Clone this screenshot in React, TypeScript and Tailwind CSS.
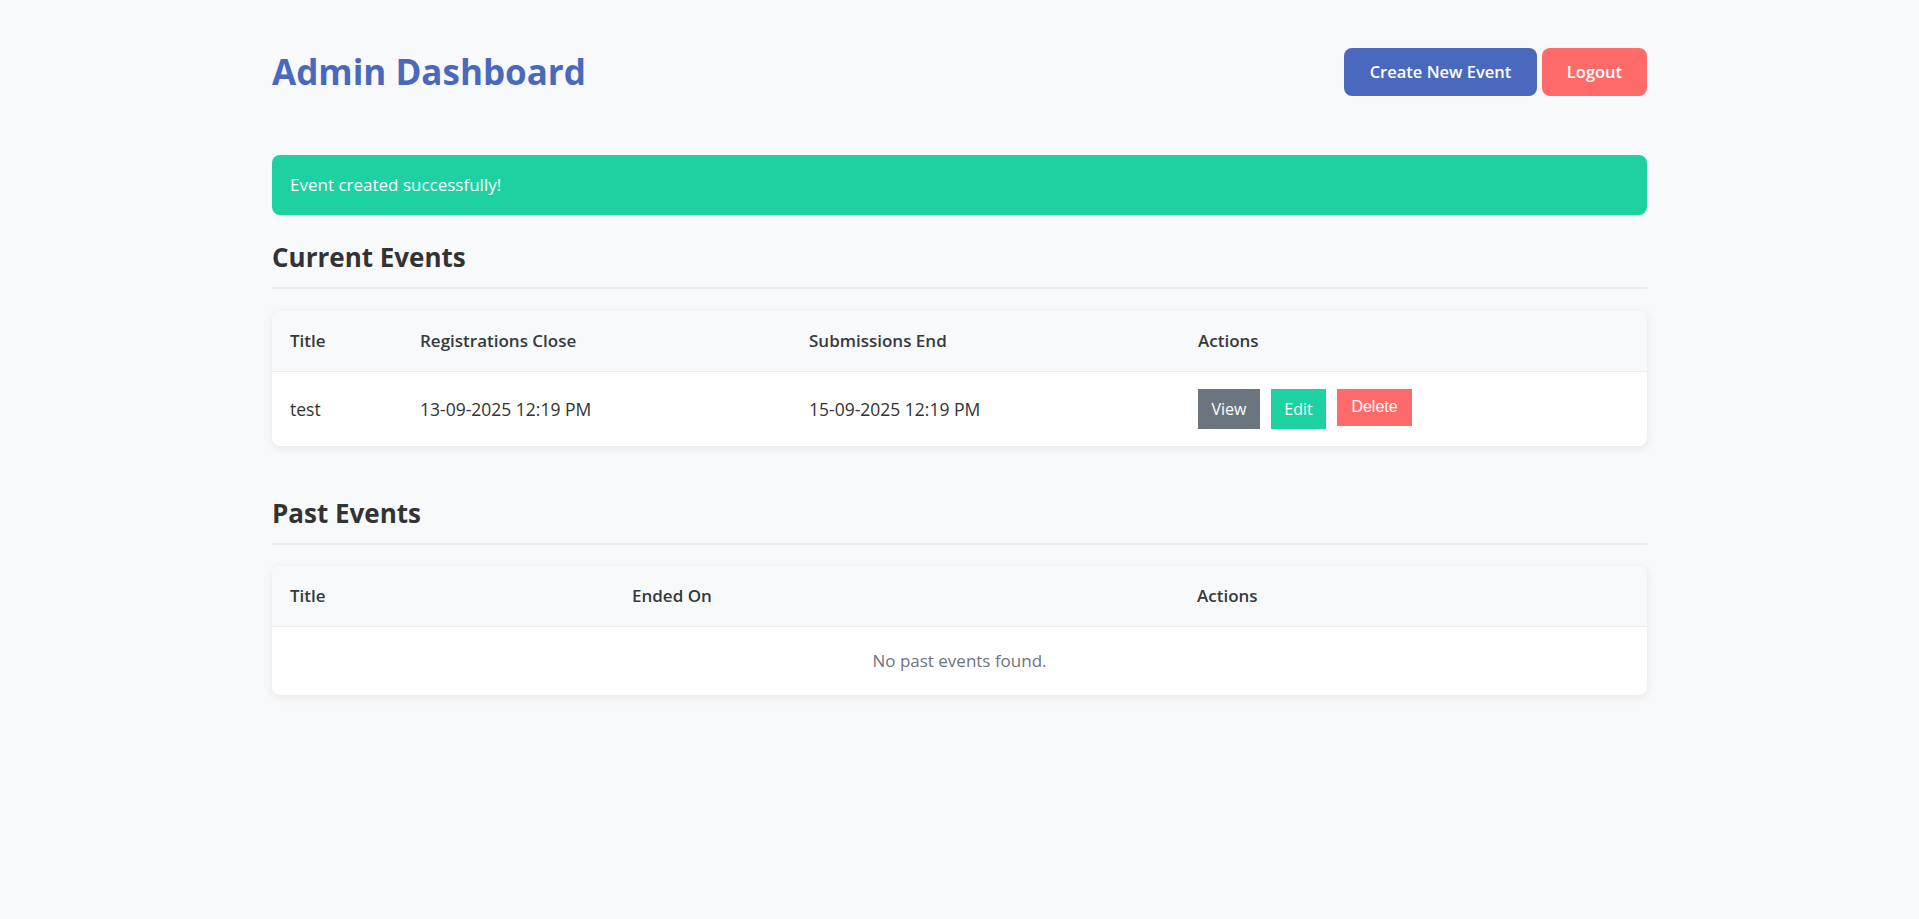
import React from "react";

type CurrentEvent = {
  title: string;
  regClose: string;
  subEnd: string;
};

const currentEvents: CurrentEvent[] = [
  { title: "test", regClose: "13-09-2025 12:19 PM", subEnd: "15-09-2025 12:19 PM" },
];

const SectionHeading = ({ children, top }: { children: string; top: string }) => (
  <h2
    className={`${top} border-b-2 border-[#e9ecef] pb-[14px] text-[26px] font-bold leading-[32px] text-[#333]`}
  >
    {children}
  </h2>
);

export default function App() {
  return (
    <div className="min-h-screen bg-[#f8f9fa] font-['Open_Sans',sans-serif] text-[#333]">
      <div className="mx-auto w-[1375px] pt-[48px] pb-10">
        {/* HEADER */}
        <header className="flex items-center justify-between">
          <h1 className="text-[35px] font-bold leading-[48px] text-[#4a69bd]">Admin Dashboard</h1>
          <div className="flex gap-[5px]">
            <button className="h-[48px] w-[193px] rounded-lg bg-[#4a69bd] text-[16.5px] font-semibold text-white">
              Create New Event
            </button>
            <button className="h-[48px] w-[105px] rounded-lg bg-[#ff6b6b] text-[16.5px] font-semibold text-white">
              Logout
            </button>
          </div>
        </header>

        {/* ALERT */}
        <div className="mt-[59px] flex h-[60px] items-center rounded-lg bg-[#1dd1a1] px-[18px] text-[17px] text-white">
          Event created successfully!
        </div>

        {/* CURRENT EVENTS */}
        <SectionHeading top="mt-[26px]">Current Events</SectionHeading>
        <div className="mt-[22px] overflow-hidden rounded-lg bg-white shadow-[0_2px_10px_rgba(0,0,0,0.08)]">
          <table className="w-full table-fixed border-collapse text-left">
            <colgroup>
              <col className="w-[130px]" />
              <col className="w-[389px]" />
              <col className="w-[389px]" />
              <col />
            </colgroup>
            <thead>
              <tr className="h-[60px] border-b border-[#e9ecef] bg-[#f8f9fa]">
                <th className="px-[18px] text-[17px] font-semibold text-[#343a40]">Title</th>
                <th className="px-[18px] text-[17px] font-semibold text-[#343a40]">Registrations Close</th>
                <th className="px-[18px] text-[17px] font-semibold text-[#343a40]">Submissions End</th>
                <th className="px-[18px] text-[17px] font-semibold text-[#343a40]">Actions</th>
              </tr>
            </thead>
            <tbody>
              {currentEvents.map((ev, i) => (
                <tr key={i} className="h-[75px]">
                  <td className="px-[18px] text-[17.5px]">{ev.title}</td>
                  <td className="px-[18px] text-[17.5px]">{ev.regClose}</td>
                  <td className="px-[18px] text-[17.5px]">{ev.subEnd}</td>
                  <td className="px-[18px]">
                    <div className="flex items-start gap-[11px]">
                      <a className="flex h-[40px] w-[62px] items-center justify-center bg-[#6c757d] text-[16px] text-white">
                        View
                      </a>
                      <a className="flex h-[40px] w-[55px] items-center justify-center bg-[#1dd1a1] text-[16px] text-white">
                        Edit
                      </a>
                      <button className="flex h-[37px] w-[75px] items-center justify-center bg-[#ff6b6b] font-['Liberation_Sans',Arial,sans-serif] text-[16px] text-white">
                        Delete
                      </button>
                    </div>
                  </td>
                </tr>
              ))}
            </tbody>
          </table>
        </div>

        {/* PAST EVENTS */}
        <SectionHeading top="mt-[51px]">Past Events</SectionHeading>
        <div className="mt-[21px] overflow-hidden rounded-lg bg-white shadow-[0_2px_10px_rgba(0,0,0,0.08)]">
          <table className="w-full table-fixed border-collapse text-left">
            <colgroup>
              <col className="w-[342px]" />
              <col className="w-[565px]" />
              <col />
            </colgroup>
            <thead>
              <tr className="h-[60px] border-b border-[#e9ecef] bg-[#f8f9fa]">
                <th className="px-[18px] text-[17px] font-semibold text-[#343a40]">Title</th>
                <th className="px-[18px] text-[17px] font-semibold text-[#343a40]">Ended On</th>
                <th className="px-[18px] text-[17px] font-semibold text-[#343a40]">Actions</th>
              </tr>
            </thead>
            <tbody>
              <tr className="h-[69px]">
                <td colSpan={3} className="px-[18px] text-center text-[17px] text-[#6c757d]">
                  No past events found.
                </td>
              </tr>
            </tbody>
          </table>
        </div>
      </div>
    </div>
  );
}
